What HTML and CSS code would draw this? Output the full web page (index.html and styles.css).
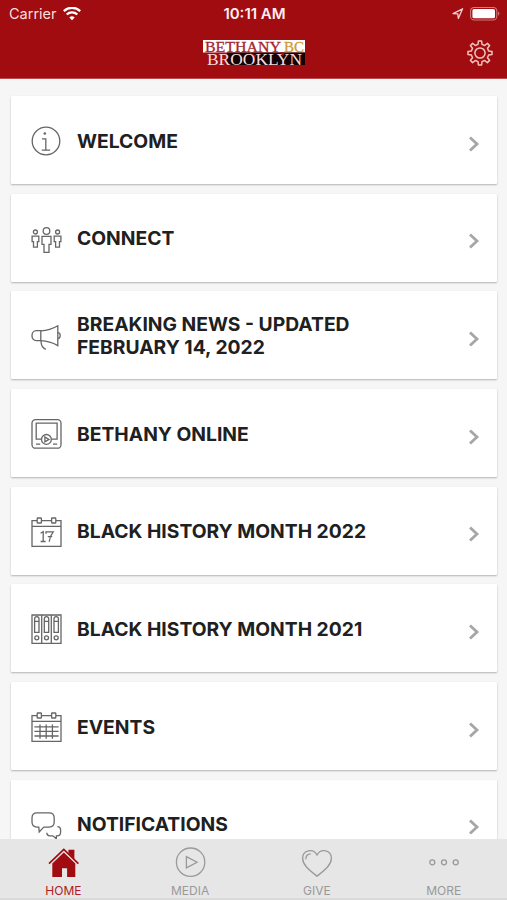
FILE: index.html
```html
<!DOCTYPE html>
<html lang="en">
<head>
    <meta charset="UTF-8">
    <meta name="viewport" content="width=device-width, initial-scale=1.0">
    <title>Bethany BC Brooklyn</title>
    <link rel="stylesheet" href="styles.css">
</head>
<body>

    <header class="header">
        <div class="status-bar">
            <div class="carrier">
                <span>Carrier</span>
                <svg width="18" height="14" viewBox="0 0 18 14" fill="none" stroke="#fff" stroke-width="2.3">
                    <path d="M0.8 4.1a11.7 11.7 0 0 1 16.4 0"/>
                    <path d="M3.7 7.5a7.6 7.6 0 0 1 10.6 0"/>
                    <path d="M9 13.2L6.3 10.5a3.8 3.8 0 0 1 5.4 0z" fill="#fff" stroke="none"/>
                </svg>
            </div>
            <div class="time">10:11 AM</div>
            <div class="status-right">
                <svg width="12" height="12" viewBox="0 0 12 12" fill="none" stroke="#f6cfd0" stroke-width="1.3" stroke-linejoin="round">
                    <path d="M1 5.6L10.6 0.8L6.3 10.4L5.8 5.8z"/>
                </svg>
                <svg width="30" height="14" viewBox="0 0 30 14">
                    <rect x="0.6" y="0.4" width="26.2" height="12.6" rx="3.6" fill="none" stroke="#cf7a7d" stroke-width="1.1"/>
                    <rect x="2.4" y="2.1" width="22.6" height="9.2" rx="1.6" fill="#fff"/>
                    <path d="M28.1 4.6c1.8 0.7 1.8 3.5 0 4.2z" fill="#cf7a7d"/>
                </svg>
            </div>
        </div>
        <div class="nav-bar">
            <svg class="logo" width="102" height="30" viewBox="0 0 102 30">
                <rect x="0" y="0" width="102" height="12.5" fill="#fff"/>
                <rect x="24" y="12.5" width="78" height="12.5" fill="#130304"/>
                <path d="M46 12.5l8 3l-4 3zM77 12.5l5 0l-2 4z" fill="#a00c10"/>
                <text x="2" y="11.6" font-size="15" textLength="76" lengthAdjust="spacingAndGlyphs" fill="#a8242b" stroke="#a8242b" stroke-width="0.3">BETHANY</text>
                <text x="81" y="11.6" font-size="15" textLength="20" lengthAdjust="spacingAndGlyphs" fill="#cf9a35" stroke="#cf9a35" stroke-width="0.3">BC</text>
                <text x="4" y="24.6" font-size="17" textLength="95" lengthAdjust="spacingAndGlyphs" fill="#f6dcdc">BROOKLYN</text>
            </svg>
            <svg class="settings" width="26" height="26" viewBox="-13 -13 26 26" fill="none" stroke="#f3c3bd" stroke-width="1.5" stroke-linejoin="round">
                <path d="M-2 -8.6L-1.6 -12H1.6L2 -8.6L4.7 -7.5L7.4 -9.6L9.6 -7.4L7.5 -4.7L8.6 -2L12 -1.6V1.6L8.6 2L7.5 4.7L9.6 7.4L7.4 9.6L4.7 7.5L2 8.6L1.6 12H-1.6L-2 8.6L-4.7 7.5L-7.4 9.6L-9.6 7.4L-7.5 4.7L-8.6 2L-12 1.6V-1.6L-8.6 -2L-7.5 -4.7L-9.6 -7.4L-7.4 -9.6L-4.7 -7.5z"/>
                <circle r="5.1"/>
            </svg>
        </div>
    </header>

    <main class="menu">
        <a class="card" href="#">
            <svg class="icon" viewBox="0 0 32 32">
                <circle cx="15" cy="16" r="13.8"/>
                <path d="M11 13.8h3.8v11.2M10.8 25.2h8.4"/>
                <circle cx="13.8" cy="8.5" r="1.3" fill="#666" stroke="none"/>
            </svg>
            <span class="title">WELCOME</span>
            <svg class="chevron" viewBox="0 0 12 16"><path d="M2 1.5l7 6.5l-7 6.5"/></svg>
        </a>
        <a class="card" href="#">
            <svg class="icon" viewBox="0 0 32 32">
                <circle cx="15.5" cy="8" r="3.3"/>
                <path d="M11 13.3h9v8h-2v8.1h-5v-8.1h-2z"/>
                <circle cx="4.4" cy="9" r="2"/>
                <circle cx="26.6" cy="9" r="2"/>
                <path d="M1.1 13.2h6.7v5.4h-1.4v5.6h-3.9v-5.6h-1.4zM23.2 13.2h6.7v5.4h-1.4v5.6h-3.9v-5.6h-1.4z"/>
            </svg>
            <span class="title">CONNECT</span>
            <svg class="chevron" viewBox="0 0 12 16"><path d="M2 1.5l7 6.5l-7 6.5"/></svg>
        </a>
        <a class="card" href="#">
            <svg class="icon" viewBox="0 0 32 32">
                <path d="M9.8 10.7H5.4C-0.5 10.7-0.5 20.7 5.4 20.7H9.8z"/>
                <path d="M9.8 10.8C16 10.6 21.5 9 26.8 5.8V25.6C21.5 22.6 16 21 9.8 20.7"/>
                <path d="M26.8 12.6c3.2 0 3.2 6 0 6M10 20.8c0 4 1.6 7.2 4.8 8.6"/>
            </svg>
            <span class="title">BREAKING NEWS - UPDATED FEBRUARY 14, 2022</span>
            <svg class="chevron" viewBox="0 0 12 16"><path d="M2 1.5l7 6.5l-7 6.5"/></svg>
        </a>
        <a class="card" href="#">
            <svg class="icon" viewBox="0 0 32 32">
                <rect x="1" y="1.6" width="29" height="28.6" rx="3.5"/>
                <path d="M10.4 21.2H5.2V5.2h20.9v16H20.4M5 26.1h4.2M22 26.1h4.2"/>
                <circle cx="15.4" cy="21.4" r="4.9"/>
                <path d="M13.9 19v4.8l4-2.4z"/>
            </svg>
            <span class="title">BETHANY ONLINE</span>
            <svg class="chevron" viewBox="0 0 12 16"><path d="M2 1.5l7 6.5l-7 6.5"/></svg>
        </a>
        <a class="card" href="#">
            <svg class="icon" viewBox="0 0 32 32">
                <path d="M6 4.7H1v25.6h29V4.7h-5M10.6 4.7h9.8M1 10.4h29"/>
                <rect x="6.2" y="2" width="4.2" height="5" rx="0.6"/>
                <rect x="20.6" y="2" width="4.2" height="5" rx="0.6"/>
                <path d="M9.6 17.2l2.6-1.5v9.8M9.6 25.5h5M15 17.8v-2h7.2c-2.4 3-3.6 6-4 10M16.8 20.7h4.4"/>
            </svg>
            <span class="title">BLACK HISTORY MONTH 2022</span>
            <svg class="chevron" viewBox="0 0 12 16"><path d="M2 1.5l7 6.5l-7 6.5"/></svg>
        </a>
        <a class="card" href="#">
            <svg class="icon" viewBox="0 0 32 32">
                <path d="M1 2h29v28.4H1zM10.7 2v28.4M20.3 2v28.4"/>
                <path d="M3.6 19.4V6q0-2.4 2.2-2.4T8 6v13.4zM13.3 19.4V6q0-2.4 2.2-2.4T17.7 6v13.4zM23 19.4V6q0-2.4 2.2-2.4T27.4 6v13.4z"/>
                <path d="M3.6 8.4H8M13.3 8.4h4.4M23 8.4h4.4"/>
                <circle cx="5.8" cy="24.8" r="2"/>
                <circle cx="15.5" cy="24.8" r="2"/>
                <circle cx="25.2" cy="24.8" r="2"/>
            </svg>
            <span class="title">BLACK HISTORY MONTH 2021</span>
            <svg class="chevron" viewBox="0 0 12 16"><path d="M2 1.5l7 6.5l-7 6.5"/></svg>
        </a>
        <a class="card" href="#">
            <svg class="icon" viewBox="0 0 32 32">
                <path d="M6 4.7H1v25.6h29V4.7h-5M10.6 4.7h9.8M1 10.4h29"/>
                <rect x="6.2" y="2" width="4.2" height="5" rx="0.6"/>
                <rect x="20.6" y="2" width="4.2" height="5" rx="0.6"/>
                <path d="M3.4 15.8h24.2M3.4 20.4h24.2M3.4 25h24.2M9 13.4v14.4M15.2 13.4v14.4M21.4 13.4v14.4"/>
            </svg>
            <span class="title">EVENTS</span>
            <svg class="chevron" viewBox="0 0 12 16"><path d="M2 1.5l7 6.5l-7 6.5"/></svg>
        </a>
        <a class="card" href="#">
            <svg class="icon" viewBox="0 0 32 32">
                <path d="M6 3.9h12.2q5 0 5 5v4.2q0 5-5 5h-5.4l-4.6 4.8l-0.4-4.8H6q-5 0-5-5V8.9q0-5 5-5z"/>
                <path d="M26.4 17.6q3.2 0 3.2 3.6v2q0 3.6-3.4 3.6h-0.8v3l-3.6-3h-3q-3 0-3-3"/>
            </svg>
            <span class="title">NOTIFICATIONS</span>
            <svg class="chevron" viewBox="0 0 12 16"><path d="M2 1.5l7 6.5l-7 6.5"/></svg>
        </a>
    </main>

    <nav class="tab-bar">
        <a class="tab active" href="#">
            <svg class="tab-icon" viewBox="0 0 32 32">
                <path d="M5.3 17.5L16.8 6.5l11.5 11v13.4h-8.2v-8.6h-5.1v8.6H5.3z" fill="#a00c10" stroke="none"/>
                <path d="M21.4 3.7h6v9.2l-6-5.8z" fill="#a00c10" stroke="none"/>
                <path d="M2 17.7L16.8 3.5l14.6 14.2" stroke="#a00c10" stroke-width="1.7"/>
            </svg>
            <span>HOME</span>
        </a>
        <a class="tab" href="#">
            <svg class="tab-icon" viewBox="0 0 32 32">
                <circle cx="16.6" cy="16.2" r="14.2"/>
                <path d="M12.4 10.6v11.2l10.6-5.6z"/>
            </svg>
            <span>MEDIA</span>
        </a>
        <a class="tab" href="#">
            <svg class="tab-icon" viewBox="0 0 32 32">
                <path d="M16 30.2C8 23.8 1.6 19 1.6 12.2C1.6 4 12.4 2 16 9C19.6 2 30.4 4 30.4 12.2C30.4 19 24 23.8 16 30.2z"/>
                <path d="M4.8 13.2c0-3.6 2-5.4 5-5.4"/>
            </svg>
            <span>GIVE</span>
        </a>
        <a class="tab" href="#">
            <svg class="tab-icon" viewBox="0 0 32 32">
                <circle cx="4.3" cy="16.3" r="2.5"/>
                <circle cx="16" cy="16.3" r="2.5"/>
                <circle cx="27.7" cy="16.3" r="2.5"/>
            </svg>
            <span>MORE</span>
        </a>
    </nav>

</body>
</html>
```
FILE: styles.css
```css
* {
    margin: 0;
    padding: 0;
    box-sizing: border-box;
    font-family: Inter, "Liberation Sans", sans-serif;
}

body {
    display: flex;
    flex-direction: column;
    height: 900px;
    background: #f6f6f6;
    overflow: hidden;
}

a {
    color: inherit;
    text-decoration: none;
}

.header {
    flex: none;
    height: 79px;
    background: #a00c10;
    color: white;
    border-bottom: 1px solid #bd4a4e;
}

.status-bar {
    display: grid;
    grid-template-columns: 1fr auto 1fr;
    align-items: center;
    height: 27px;
    padding: 0 7px 0 9px;
}

.carrier {
    display: flex;
    align-items: center;
    gap: 6px;
    font-size: 14.5px;
    color: #fbdedd;
}

.time {
    font-size: 15px;
    font-weight: 600;
    color: #fdeeee;
}

.status-right {
    display: flex;
    justify-content: flex-end;
    align-items: center;
    gap: 6px;
}

.nav-bar {
    display: grid;
    grid-template-columns: 1fr auto 1fr;
    align-items: center;
    height: 52px;
    padding: 0 14px;
}

.logo {
    grid-column: 2;
    margin-top: 3px;
    overflow: visible;
}

.logo text {
    font-family: "Liberation Serif", serif;
}

.settings {
    justify-self: end;
}

.menu {
    flex: 1;
    min-height: 0;
    display: flex;
    flex-direction: column;
    gap: 9.7px;
    padding: 17px 10px 0 11px;
    overflow: hidden;
}

.card {
    flex: none;
    display: flex;
    align-items: center;
    height: 88px;
    padding: 2px 17px 0 20px;
    background: white;
    border-radius: 1px;
    box-shadow: 0 1px 2px rgba(0, 0, 0, 0.28);
}

.icon {
    flex: none;
    width: 32px;
    height: 32px;
    fill: none;
    stroke: #666;
    stroke-width: 1.3;
}

.title {
    width: 300px;
    margin-left: 14px;
    font-size: 19.3px;
    font-weight: 650;
    line-height: 23px;
    color: #202020;
}

.chevron {
    width: 12px;
    height: 16px;
    margin-left: auto;
    margin-top: 5px;
    fill: none;
    stroke: #a6a6a6;
    stroke-width: 2.8;
}

.tab-bar {
    flex: none;
    display: flex;
    height: 61px;
    background: #e6e6e6;
    border-bottom: 2px solid #dadada;
}

.tab {
    flex: 1;
    display: flex;
    flex-direction: column;
    align-items: center;
    padding-top: 7px;
    font-size: 12px;
    line-height: 15px;
    color: #999;
}

.tab span {
    margin-top: 5px;
}

.tab-icon {
    width: 32px;
    height: 32px;
    fill: none;
    stroke: #999;
    stroke-width: 1.3;
}

.active {
    color: #b01c22;
}
```
